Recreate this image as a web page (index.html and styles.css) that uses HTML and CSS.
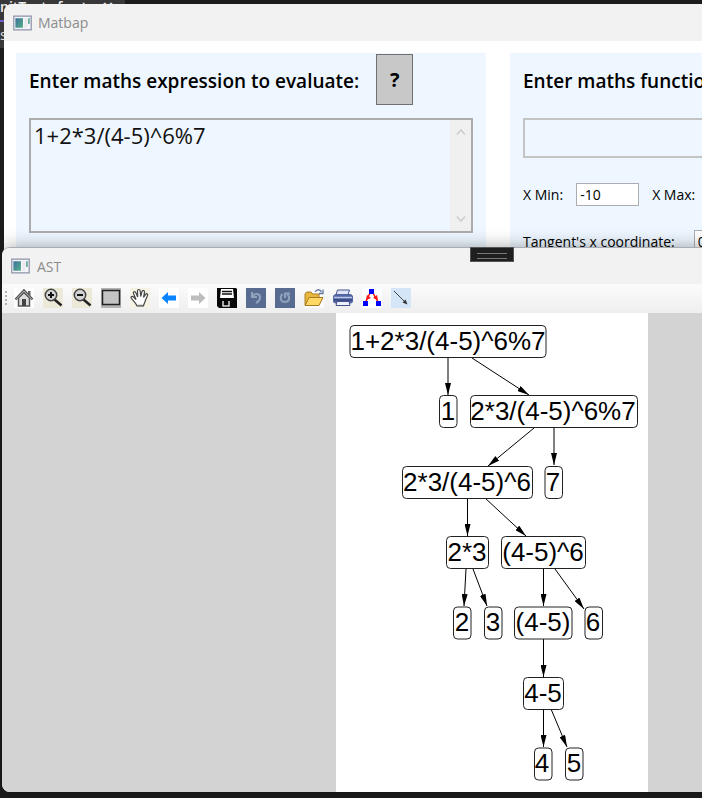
FILE: index.html
```
<!DOCTYPE html>
<html lang="en">
<head>
<meta charset="utf-8">
<title>Matbap</title>
<link rel="stylesheet" href="styles.css">
</head>
<body>
<div class="desktop">
  <div class="editor">
    <div class="editor-tab"><span>nitTests.f…</span><span>⊢</span><span>✕</span></div>
    <div class="editor-body">st</div>
  </div>

  <main class="window window-main">
    <header class="titlebar">
      <svg class="app-icon" viewBox="0 0 20 16"><rect x=".8" y=".8" width="18.400" height="14.400" fill="#f4f5f8" stroke="#9a9fb2" stroke-width="1.500"/><rect x="2.500" y="3" width="8" height="10" fill="url(#appfill)"/><rect x="12" y="3" width="3" height="10" fill="#e9e9ee"/><rect x="16" y="3" width="1.500" height="6" fill="#4a9a8a"/><defs><linearGradient id="appfill" x1="0" y1="0" x2="1" y2="1"><stop offset="0" stop-color="#3c6f9c"/><stop offset="1" stop-color="#57b08a"/></linearGradient></defs></svg>
      <span>Matbap</span>
    </header>
    <div class="panels">
      <section class="panel">
        <div class="panel-head">
          <label for="expr">Enter maths expression to evaluate:</label>
          <button class="help" type="button">?</button>
        </div>
        <div class="expr-box">
          <textarea id="expr" spellcheck="false">1+2*3/(4-5)^6%7</textarea>
          <div class="scroll">
            <svg viewBox="0 0 10 8"><path d="M1 6.500 5 2l4 4.500"/></svg>
            <svg viewBox="0 0 10 8"><path d="M1 1.500 5 6l4-4.500"/></svg>
          </div>
        </div>
      </section>
      <section class="panel">
        <div class="panel-head"><label for="func">Enter maths function to plot:</label></div>
        <input class="func-box" id="func" type="text">
        <div class="field-row">
          <label for="xmin">X Min:</label><input id="xmin" type="text" value="-10">
          <label for="xmax">X Max:</label><input id="xmax" type="text" value="10">
        </div>
        <div class="field-row tangent">
          <label for="tan">Tangent's x coordinate:</label><input id="tan" type="text" value="0">
        </div>
      </section>
    </div>
  </main>

  <section class="window window-ast">
    <header class="titlebar">
      <svg class="app-icon" viewBox="0 0 20 16"><rect x=".8" y=".8" width="18.400" height="14.400" fill="#f4f5f8" stroke="#9a9fb2" stroke-width="1.500"/><rect x="2.500" y="3" width="8" height="10" fill="url(#appfill)"/><rect x="12" y="3" width="3" height="10" fill="#e9e9ee"/><rect x="16" y="3" width="1.500" height="6" fill="#4a9a8a"/></svg>
      <span>AST</span>
    </header>
    <div class="toolbar">
      <span class="grip"></span>
      <button type="button" aria-label="Home"><svg viewBox="0 0 20 20"><rect width="20" height="20" fill="#fff"/><path d="M4.500 10v8h11v-8L10 4.500z" fill="#ddd" stroke="#555" stroke-width="1.500"/><path d="M14 3h2.500v5L14 6z" fill="#666"/><path d="M1.500 11.500 10 2.500l8.500 9" fill="none" stroke="#555" stroke-width="2.500"/><path d="M2 11.500 10 3l8 8.500" fill="none" stroke="#ccc" stroke-width=".8"/><rect x="8" y="11" width="4" height="7" fill="#444"/></svg></button>
      <button type="button" aria-label="Zoom in"><svg viewBox="0 0 20 20"><rect width="20" height="20" fill="#ece9d8"/><path d="m11.500 11.500 7 6" stroke="#222" stroke-width="2.500"/><circle cx="8" cy="7" r="5.700" fill="#d4d4d4" stroke="#444" stroke-width="1.500"/><path d="M5 7h6M8 4v6" stroke="#111" stroke-width="2"/></svg></button>
      <button type="button" aria-label="Zoom out"><svg viewBox="0 0 20 20"><rect width="20" height="20" fill="#ece9d8"/><path d="m11.500 11.500 7 6" stroke="#222" stroke-width="2.500"/><circle cx="8" cy="7" r="5.700" fill="#d4d4d4" stroke="#444" stroke-width="1.500"/><path d="M5 7h6" stroke="#111" stroke-width="2"/></svg></button>
      <button type="button" aria-label="Zoom window"><svg viewBox="0 0 20 20"><rect width="20" height="20" fill="#b4b4b4"/><rect x="1.500" y="2.500" width="17" height="14" fill="#c3c3c3" stroke="#222" stroke-width="1.500"/></svg></button>
      <button type="button" aria-label="Pan"><svg viewBox="0 0 20 20"><rect width="20" height="20" fill="#f6f2e4"/><path d="M7 18c-1-3-5-6-6-8.500 0-1.500 2-1.500 3.500.5L6 11.500 3.500 5.500C3 3.500 5 3 6 5l1.700 4L7.500 3c0-2 2.500-2 2.700 0l.5 5.500 1.300-5c.7-1.700 2.700-1 2.500.8l-1 5 2-3c1-1.200 2.700-.4 2 1.300-1 2.400-2 4-2.500 6-.5 2-1.500 3-1.500 4.400z" fill="#fff" stroke="#444" stroke-width="1.200"/><path d="M8 17.500h5" stroke="#777" stroke-width="1.500"/></svg></button>
      <button type="button" aria-label="Backward"><svg viewBox="0 0 20 20"><rect width="20" height="20" fill="#fff"/><path d="M2.500 10 9 4v3.500h8v5H9V16z" fill="#0a84ff"/></svg></button>
      <button type="button" aria-label="Forward"><svg viewBox="0 0 20 20"><rect width="20" height="20" fill="#fff"/><path d="M17.500 10 11 4v3.500H3v5h8V16z" fill="#bdbdbd"/></svg></button>
      <button type="button" aria-label="Save"><svg viewBox="0 0 20 20"><path d="M0 0h19l1 1v19H2l-2-2z" fill="#080808"/><path d="M4 1h12l1 9H3z" fill="#fff"/><path d="M5 3.500h10M5 6h10" stroke="#111" stroke-width="1.300"/><path d="M6 13v5h6v-5" fill="none" stroke="#ddd" stroke-width="1.500"/></svg></button>
      <button type="button" aria-label="Undo"><svg viewBox="0 0 20 20"><rect width="20" height="20" fill="#586c92"/><path d="M6 4v5h5M6.500 8.500c2-3.500 8-3.500 7.500 1.500-.2 2.500-2 4-4 5" fill="none" stroke="#8fa3bd" stroke-width="2"/></svg></button>
      <button type="button" aria-label="Redo"><svg viewBox="0 0 20 20"><rect width="20" height="20" fill="#586c92"/><path d="M7.500 6c-3 3-2 8 2 8 5 0 6-4.500 3-7.500M10 10V5.500h5" fill="none" stroke="#8fa3bd" stroke-width="2"/></svg></button>
      <button type="button" aria-label="Open"><svg viewBox="0 0 20 20"><rect width="20" height="20" fill="#fbfbfb"/><path d="M1 17V6l1.500-2H7l1.500 2H15v4" fill="#e9b73c" stroke="#a87a22"/><path d="M1 17.500 5 9.500h14L15 17.500z" fill="#ffd765" stroke="#a87a22"/><path d="M11 4c2-3 5-3 6.500 0M19 1.500V5.500h-4" fill="none" stroke="#60789c" stroke-width="1.300"/></svg></button>
      <button type="button" aria-label="Print"><svg viewBox="0 0 20 20"><path d="M4.500 2h12L15 7H3z" fill="#dfe5f8" stroke="#46548c"/><path d="M2 6h16l2 2v6l-2 1.500H2L0 14V8z" fill="#5365a2"/><path d="M1 9.500h18" stroke="#b9c5ea" stroke-width="1.500"/><path d="M1 12h18" stroke="#26356f"/><path d="M4 13.500h12l1 4H3z" fill="#edf1ff" stroke="#46548c"/></svg></button>
      <button type="button" aria-label="Layout"><svg viewBox="0 0 20 20"><rect width="20" height="20" fill="#fff"/><path d="M8 5 4 13M11 5l5 9" stroke="#f11" stroke-width="1.500"/><path d="m4 12 1-5 4 3zM16 12l-5-2 4-3z" fill="#f11"/><rect x="7" y="1" width="5" height="5" fill="#00f"/><rect x="1" y="13" width="5" height="5" fill="#00f"/><rect x="14" y="13" width="5" height="5" fill="#00f"/></svg></button>
      <button type="button" aria-label="Edge"><svg viewBox="0 0 20 20"><rect width="20" height="20" fill="#d3e5f7"/><path d="m3 3 12 12" stroke="#444"/><path d="m16.500 16.500-5-2 3-3z" fill="#333"/></svg></button>
    </div>
    <div class="viewer">
      <svg class="graph" viewBox="336 313 312 479">
        <defs><marker id="arrow" viewBox="0 0 12 6" refX="12" refY="3" markerWidth="12" markerHeight="6" markerUnits="userSpaceOnUse" orient="auto"><path d="M0 0 12 3 0 6z"/></marker></defs>
        <g class="edges">
          <path d="M448 358V395"/><path d="M472 358 529 395"/>
          <path d="M534 428 488 466"/><path d="M554 428V465"/>
          <path d="M467.500 498V536"/><path d="M485 498 526 536"/>
          <path d="M466 569 464 606"/><path d="M473 569 487 606"/>
          <path d="M543.500 569V606"/><path d="M555 569 584 609"/>
          <path d="M543.500 639V677"/>
          <path d="M543.500 709V747"/><path d="M551 709 567 747"/>
        </g>
        <g class="nodes">
          <rect x="350" y="325.500" width="196" height="32" rx="4"/><text x="448" y="350">1+2*3/(4-5)^6%7</text>
          <rect x="439.500" y="395.500" width="17.500" height="32" rx="4"/><text x="448" y="420">1</text>
          <rect x="470.500" y="395.500" width="167" height="32" rx="4"/><text x="553" y="420">2*3/(4-5)^6%7</text>
          <rect x="402.500" y="466.500" width="130" height="32" rx="4"/><text x="467" y="491">2*3/(4-5)^6</text>
          <rect x="545" y="466.500" width="17.500" height="32" rx="4"/><text x="553" y="491">7</text>
          <rect x="446.500" y="536.500" width="42" height="32" rx="4"/><text x="467" y="561">2*3</text>
          <rect x="501.500" y="536.500" width="84" height="32" rx="4"/><text x="543" y="561">(4-5)^6</text>
          <rect x="453.500" y="607" width="17.500" height="32" rx="4"/><text x="462" y="631">2</text>
          <rect x="484.500" y="607" width="17.500" height="32" rx="4"/><text x="493" y="631">3</text>
          <rect x="514.500" y="607" width="57.500" height="32" rx="4"/><text x="543" y="631">(4-5)</text>
          <rect x="585" y="607" width="17.500" height="32" rx="4"/><text x="593" y="631">6</text>
          <rect x="523.500" y="677.500" width="40" height="32" rx="4"/><text x="543" y="702">4-5</text>
          <rect x="534.500" y="748" width="17.500" height="32" rx="4"/><text x="542" y="772">4</text>
          <rect x="565.500" y="748" width="17.500" height="32" rx="4"/><text x="574" y="772">5</text>
        </g>
      </svg>
    </div>
    <div class="debug-handle"></div>
  </section>
</div>
</body>
</html>
```
FILE: styles.css
```
* { box-sizing: border-box; }
body { margin: 0; font-family: "Open Sans", "Noto Sans", sans-serif; color: #000; }
.desktop { position: relative; height: 100vh; overflow: hidden; background: #1c1c1c; }

.editor { width: 125px; }
.editor-tab { display: flex; gap: 8px; height: 22px; background: #38383a; border-bottom: 2px solid #6c5fd0; color: #f0f0f0; font-size: 14px; line-height: 14px; font-weight: 600; white-space: nowrap; overflow: hidden; }
.editor-body { height: 26px; background: #38383a; color: #ddd; font-size: 14px; line-height: 26px; }

.window { position: absolute; display: flex; flex-direction: column; background: #fff; width: calc(100% + 278px); border-radius: 8px; }
.window-main { left: 4px; top: 4px; bottom: 20px; overflow: hidden; }
.window-ast { left: 2px; top: 247px; bottom: 6px; border-top: 1px solid #a9adb3; box-shadow: 0 0 18px rgba(0, 0, 0, .35); }

.titlebar { display: flex; align-items: center; gap: 6px; height: 37px; padding-left: 9px; background: #f2f2f2; color: #8c8c8c; font-size: 14px; border-radius: 8px 8px 0 0; flex: none; }
.window-ast .titlebar { height: 36px; gap: 7px; }
.app-icon { width: 19px; height: 16px; }

.panels { display: flex; gap: 24px; padding: 12px; height: 220px; }
.panel { width: 470px; flex: none; padding: 1px 13px; background: #eef7ff; height: 500px; }
.panel-head { display: flex; align-items: center; gap: 17px; height: 51px; margin-bottom: 13px; font-size: 19px; font-weight: 600; }
.panel-head label { white-space: nowrap; padding-top: 2px; }
.help { width: 37px; height: 51px; padding: 0; border: 1px solid #707070; background: #c8c8c8; font: inherit; font-size: 20px; font-weight: 700; }
.expr-box { display: flex; height: 115px; border: 2px solid #acacac; background: #eef6ff; }
.expr-box textarea { flex: 1; border: 0; padding: 0 3px; outline: 0; resize: none; overflow: hidden; background: transparent; color: #111; font: 22px/30px "Open Sans", sans-serif; }
.scroll { width: 21px; padding: 8px 0; background: #f0f0f0; display: flex; flex-direction: column; justify-content: space-between; align-items: center; }
.scroll svg { width: 10px; height: 8px; fill: none; stroke: #cdcdcd; stroke-width: 1.500; }
.func-box { display: block; width: 100%; height: 40px; border: 2px solid #c4c4c4; background: #eef6ff; }
.field-row { display: flex; align-items: center; gap: 13px; height: 24px; margin-top: 24px; font-size: 14px; white-space: nowrap; }
.field-row input { width: 63px; height: 23px; padding: 0 3px; border: 1px solid #abadb3; background: #fff; font: inherit; }
.tangent { gap: 19px; margin-top: 23px; }

.toolbar { display: flex; align-items: center; gap: 9px; height: 28px; padding-left: 3px; background: linear-gradient(#fbfbfb, #efefef); flex: none; }
.toolbar button { width: 20px; height: 20px; padding: 0; border: 0; background: none; }
.toolbar svg { display: block; width: 20px; height: 20px; }
.grip { width: 2px; height: 15px; margin-right: -2px; background: repeating-linear-gradient(#b0b0b0 0 2px, transparent 2px 4px); }
.viewer { flex: 1; min-height: 0; display: flex; justify-content: center; align-items: flex-start; background: #d3d3d3; border-top: 1px solid #efefef; border-radius: 0 0 8px 8px; }
.graph { width: 312px; height: 100%; background: #fff; }
.edges { fill: none; stroke: #000; }
.edges path { marker-end: url(#arrow); }
.nodes rect { fill: #fff; stroke: #222; }
#arrow path { fill: #000; stroke: none; }
.nodes text { font: 26px "Liberation Sans", Arial, sans-serif; text-anchor: middle; }
.debug-handle { position: absolute; left: 468px; top: -1px; width: 44px; height: 15px; padding: 5px 6px; background: #1f1f1f; border: 1px solid #555; }
.debug-handle::before { content: ""; display: block; height: 4px; border: 1px solid #777; border-width: 1px 0; }
```
